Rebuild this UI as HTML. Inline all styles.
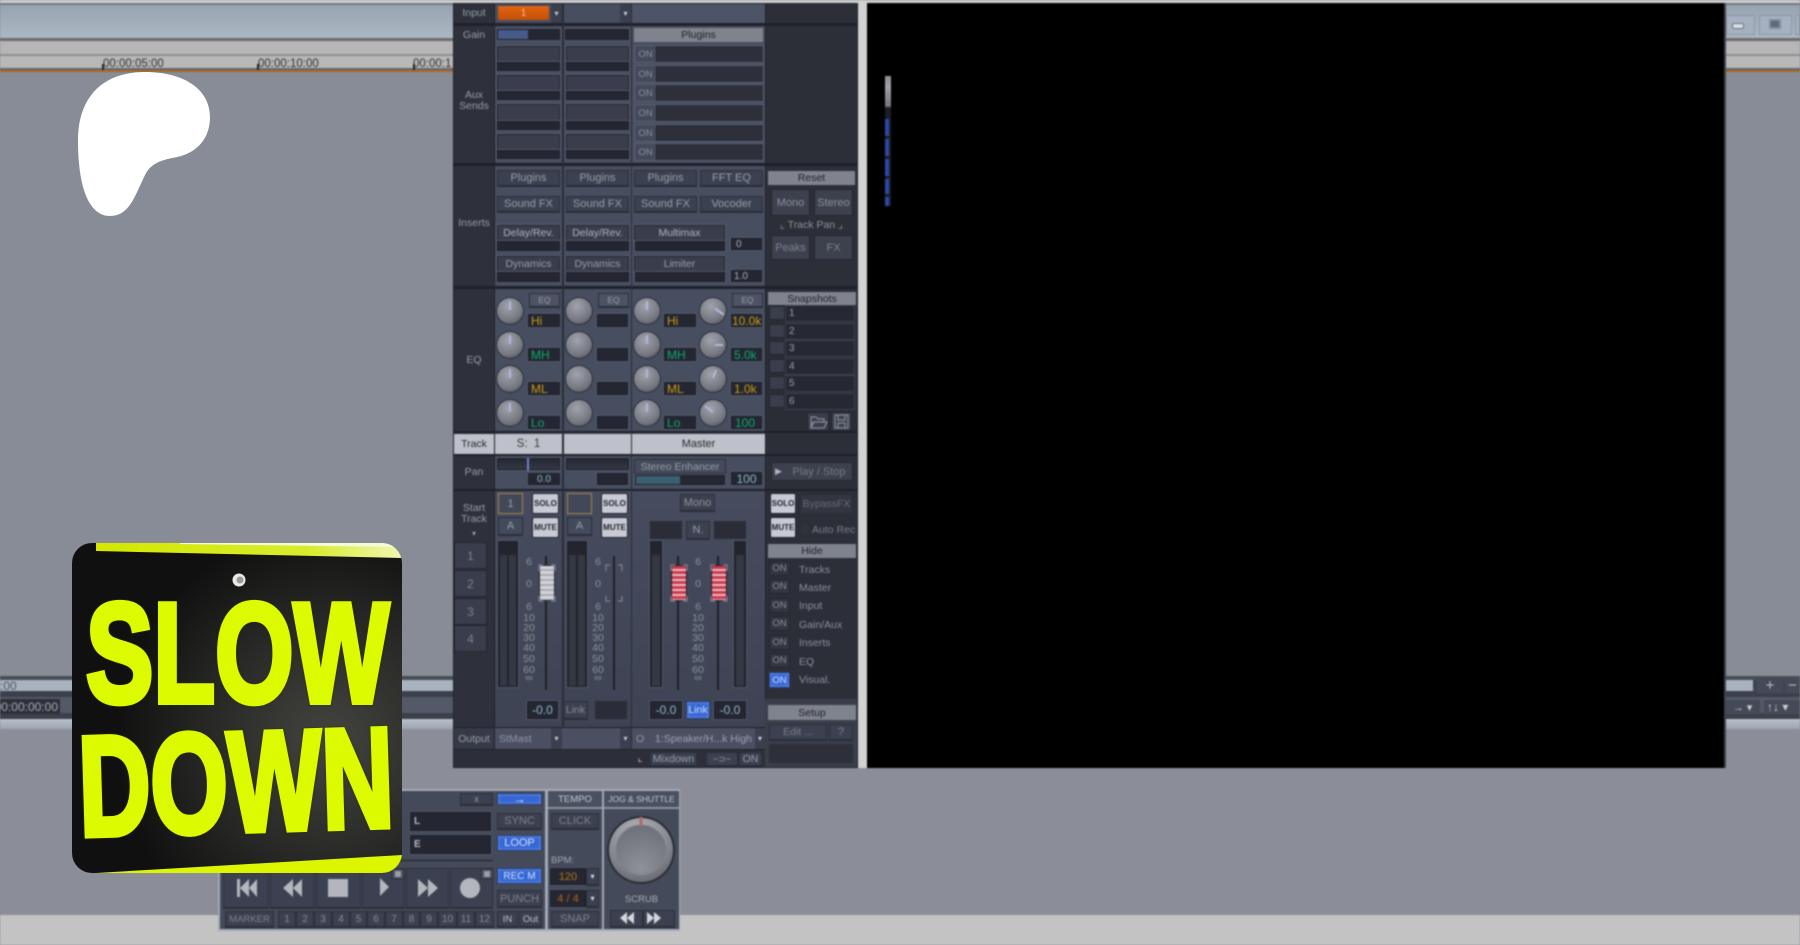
<!DOCTYPE html>
<html><head><meta charset="utf-8"><style>
html,body{margin:0;padding:0;width:1800px;height:945px;overflow:hidden;background:#878c96;font-family:"Liberation Sans",sans-serif}
div,span{position:absolute;box-sizing:border-box}
.c{display:flex;align-items:center;justify-content:center;white-space:nowrap;font-size:11px;color:#989da8}
.u{left:0;top:0;width:1800px;height:945px;filter:blur(.7px)}
.d{background:#242732;box-shadow:inset 0 0 0 1px #1c1e27,0 0 0 1px #51586a}
.b{background:#3b4150;border:1px solid #2c2f3a;box-shadow:0 1px 0 #2a2d37}
.h{background:#7f838d;color:#1f2128}
.l{background:#c8cad5;color:#22242b;border:1px solid #22242b;font-size:8px;font-weight:bold;border-radius:2px}
.n{background:#3667d4;color:#cfe0ff;box-shadow:inset 0 0 3px #7ea0f0;border:1px solid #263a70}
.y{color:#c99a12;font-size:12px;justify-content:flex-start;padding-left:3px}
.g{color:#0ea868;font-size:12px;justify-content:flex-start;padding-left:3px}
.v{color:#8fb6c8;font-size:12px}
.t{text-align:center}
.m{background:#3a3e4c;border:1px solid #23262e}
.a{background:#3a3e4c;border:1px solid #23262e;box-shadow:0 0 0 1px #565d70}
.o{background:#2d303b;box-shadow:0 0 0 1px #585f72}
.p{background:#444a5a;box-shadow:1px 0 0 #23262e;font-size:9.500px;color:#8a8f9b}
.f{background:#262932;box-shadow:0 0 0 1px #3d414d}
text{font-family:"Liberation Sans",sans-serif}
</style></head><body>

<div class="u">
<div style="left:0;top:0;width:1800px;height:3px;background:#cfcfcf"></div>
<div style="left:0;top:3px;width:1800px;height:3px;background:#74787e"></div>
<div style="left:0;top:5px;width:1800px;height:33px;background:linear-gradient(#97a3b1,#abb7c2)"></div>
<div style="left:0;top:38px;width:1800px;height:3px;background:#6c6c6e"></div>
<div style="left:0;top:41px;width:1800px;height:13px;background:#b6b6b6"></div>
<div style="left:0;top:54px;width:1800px;height:2px;background:#8e8e90"></div>
<div style="left:0;top:56px;width:1800px;height:13px;background:#b8b8b8"></div>
<div style="left:0;top:68px;width:1800px;height:2px;background:#66666a"></div>
<div style="left:0;top:70px;width:1800px;height:2px;background:#a8682a"></div>
<div class="c" style="left:103px;top:57px;height:13px;font-size:11.500px;color:#333337">00:00:05:00</div>
<div class="c" style="left:258px;top:57px;height:13px;font-size:11.500px;color:#333337">00:00:10:00</div>
<div class="c" style="left:413px;top:57px;height:13px;font-size:11.500px;color:#333337">00:00:1</div>
<div style="left:102px;top:64px;width:2px;height:6px;background:#222"></div>
<div style="left:257px;top:64px;width:2px;height:6px;background:#222"></div>
<div style="left:413px;top:64px;width:2px;height:6px;background:#222"></div>

<!-- top right buttons -->
<div style="left:1726px;top:15px;width:29px;height:20px;background:#a5b1c0;border:1px solid #8c97a6"></div>
<div style="left:1732px;top:23px;width:12px;height:6px;background:#d9dde2;border:1px solid #6b7280;border-radius:2px"></div>
<div style="left:1759px;top:15px;width:33px;height:20px;background:#a5b1c0;border:1px solid #8c97a6"></div>
<div style="left:1769px;top:19px;width:12px;height:10px;background:#5f6876;border:2px solid #838c9a"></div>
<div style="left:1795px;top:15px;width:5px;height:20px;background:#a5b1c0;border:1px solid #8c97a6"></div>

<!-- middle strip -->
<div style="left:0;top:676px;width:1800px;height:5px;background:#484d59"></div>
<div style="left:0;top:680px;width:1800px;height:11px;background:#a9b3bf"></div>
<div style="left:0;top:691px;width:1800px;height:28px;background:#535967"></div>
<div style="left:0;top:691px;width:1800px;height:6px;background:#3c404b"></div>
<div style="left:0;top:713px;width:1800px;height:6px;background:#3c404b"></div>
<div style="left:0;top:719px;width:1800px;height:10px;background:linear-gradient(#b9c1ca,#9aa4b0)"></div>
<div style="left:0;top:729px;width:1800px;height:186px;background:#8b8e98"></div>
<div style="left:0;top:915px;width:1800px;height:30px;background:#c3c3c3"></div>
<div class="c" style="left:0;top:680px;height:11px;font-size:12px;color:#4c5868">:00</div>
<div class="c" style="left:0;top:699px;width:60px;height:15px;background:#2d303a;font-size:12px;color:#a5a8ad;overflow:hidden;justify-content:flex-end;padding-right:2px">00:00:00:00</div>
<div style="left:1753px;top:680px;width:47px;height:12px;background:#3e434f"></div>
<div class="c" style="left:1757px;top:678px;width:26px;height:15px;font-size:15px;color:#bcc0c8;background:#444a57">+</div>
<div class="c" style="left:1785px;top:678px;width:15px;height:15px;font-size:15px;color:#bcc0c8;background:#444a57">−</div>
<div class="c" style="left:1725px;top:700px;width:35px;height:14px;font-size:11px;color:#c8ccd3;background:#444a57">→ ▾</div>
<div class="c" style="left:1764px;top:700px;width:36px;height:14px;font-size:12px;color:#c8ccd3;background:#444a57;justify-content:flex-start;padding-left:3px">↑↓ ▾</div>

<!-- transport -->
<div style="left:218px;top:789px;width:462px;height:142px;background:#a3a9b5"></div>
<div style="left:220px;top:791px;width:325px;height:138px;background:#444a59"></div>
<div style="left:548px;top:791px;width:54px;height:138px;background:#444a59"></div>
<div style="left:604px;top:791px;width:75px;height:138px;background:#444a59"></div>
<div style="left:548px;top:807px;width:54px;height:2px;background:#8b91a0"></div>
<div style="left:604px;top:807px;width:75px;height:2px;background:#8b91a0"></div>
<div class="c" style="left:548px;top:791px;width:54px;height:16px;font-size:9.500px;color:#c4c8d2;background:#4a5060">TEMPO</div>
<div class="c" style="left:604px;top:791px;width:75px;height:16px;font-size:8.500px;color:#c4c8d2;background:#4a5060">JOG &amp; SHUTTLE</div>
<div class="c b" style="left:460px;top:793px;width:33px;height:12px;font-size:9px">x</div>
<div class="c n" style="left:497px;top:793px;width:45px;height:12px;font-size:12px;color:#e2e8f7">→</div>
<div class="c d" style="left:410px;top:812px;width:81px;height:19px;justify-content:flex-start;padding-left:4px;color:#b9bcc4;font-weight:bold;font-size:10px">L</div>
<div class="c d" style="left:410px;top:835px;width:81px;height:19px;justify-content:flex-start;padding-left:4px;color:#b9bcc4;font-weight:bold;font-size:10px">E</div>
<div style="left:400px;top:860px;width:93px;height:1px;background:#1c1e26"></div>
<div class="c b" style="left:497px;top:813px;width:45px;height:16px;color:#7d828e">SYNC</div>
<div class="c n" style="left:497px;top:835px;width:45px;height:16px">LOOP</div>
<div class="c n" style="left:497px;top:868px;width:45px;height:16px;font-size:10px">REC M</div>
<div class="c b" style="left:497px;top:890px;width:45px;height:17px;color:#7d828e">PUNCH</div>
<div class="c b" style="left:551px;top:813px;width:48px;height:16px;color:#7d828e">CLICK</div>
<div class="c" style="left:551px;top:855px;font-size:9.500px;color:#a2a7b2">BPM:</div>
<div class="c d" style="left:550px;top:868px;width:36px;height:17px;color:#b5730f;font-size:11px">120</div>
<div class="c b" style="left:586px;top:868px;width:13px;height:17px;font-size:8px;color:#dde">▾</div>
<div class="c d" style="left:550px;top:890px;width:36px;height:17px;color:#b5620f;font-size:11px">4 / 4</div>
<div class="c b" style="left:586px;top:890px;width:13px;height:17px;font-size:8px;color:#dde">▾</div>
<div class="c b" style="left:551px;top:911px;width:48px;height:16px;color:#7d828e">SNAP</div>
<div class="c b" style="left:225px;top:911px;width:49px;height:16px;font-size:9.500px;color:#7d828e">MARKER</div>
<div class="c b" style="left:278px;top:911px;width:18px;height:16px;font-size:10px;color:#858a96">1</div>
<div class="c b" style="left:296px;top:911px;width:18px;height:16px;font-size:10px;color:#858a96">2</div>
<div class="c b" style="left:314px;top:911px;width:18px;height:16px;font-size:10px;color:#858a96">3</div>
<div class="c b" style="left:332px;top:911px;width:18px;height:16px;font-size:10px;color:#858a96">4</div>
<div class="c b" style="left:350px;top:911px;width:17px;height:16px;font-size:10px;color:#858a96">5</div>
<div class="c b" style="left:367px;top:911px;width:18px;height:16px;font-size:10px;color:#858a96">6</div>
<div class="c b" style="left:385px;top:911px;width:18px;height:16px;font-size:10px;color:#858a96">7</div>
<div class="c b" style="left:403px;top:911px;width:17px;height:16px;font-size:10px;color:#858a96">8</div>
<div class="c b" style="left:420px;top:911px;width:18px;height:16px;font-size:10px;color:#858a96">9</div>
<div class="c b" style="left:438px;top:911px;width:19px;height:16px;font-size:10px;color:#858a96">10</div>
<div class="c b" style="left:457px;top:911px;width:18px;height:16px;font-size:10px;color:#858a96">11</div>
<div class="c b" style="left:475px;top:911px;width:19px;height:16px;font-size:10px;color:#858a96">12</div>
<div class="c b" style="left:497px;top:911px;width:21px;height:16px;font-size:9.500px;color:#bfc2c9">IN</div>
<div class="c b" style="left:519px;top:911px;width:23px;height:16px;font-size:9.500px;color:#bfc2c9">Out</div>
<div class="b" style="left:223px;top:868px;width:46px;height:40px"></div>
<div class="b" style="left:270px;top:868px;width:45px;height:40px"></div>
<div class="b" style="left:316px;top:868px;width:45px;height:40px"></div>
<div class="b" style="left:362px;top:868px;width:43px;height:40px"></div>
<div class="b" style="left:406px;top:868px;width:43px;height:40px"></div>
<div class="b" style="left:450px;top:868px;width:43px;height:40px"></div>
<div class="b" style="left:610px;top:910px;width:33px;height:17px"></div>
<div class="b" style="left:643px;top:910px;width:32px;height:17px"></div>
<div class="c" style="left:604px;top:894px;width:75px;font-size:9.500px;color:#a8adb8">SCRUB</div>

<svg style="position:absolute;left:0;top:0" width="1800" height="945">
<defs>
<radialGradient id="jog" cx=".45" cy=".25" r=".85"><stop offset="0" stop-color="#b4b6bb"/><stop offset=".6" stop-color="#84878e"/><stop offset="1" stop-color="#5f626a"/></radialGradient>
<radialGradient id="joi" cx=".5" cy=".85" r=".85"><stop offset="0" stop-color="#8e9197"/><stop offset="1" stop-color="#6c7078"/></radialGradient>
</defs>
<g fill="#b3b6bd">
<path d="M237 879h3v18h-3zM240 888l9-9v18zM249 888l8-9v18z"/>
<path d="M283 888l10-9v18zM293 888l9-9v18z"/>
<rect x="328" y="879" width="20" height="18"/>
<path d="M380 878l9 9-9 9z"/>
<path d="M418 879l10 9-10 9zM428 879l10 9-10 9z"/>
<circle cx="470" cy="888" r="10"/>
<path d="M623 918l7-6v12zM630 918l7-6v12zM650 912l7 6-7 6zM657 912l7 6-7 6z" transform="translate(-3 0)" fill="#d4d7de"/>
</g>
<rect x="392" y="869" width="12" height="10" fill="#4a4f5d" stroke="#2c2f3a"/><rect x="395" y="871" width="6" height="6" fill="#9a9da5"/>
<rect x="481" y="869" width="12" height="10" fill="#4a4f5d" stroke="#2c2f3a"/><rect x="484" y="871" width="6" height="6" fill="#9a9da5"/>
<circle cx="641" cy="850" r="34" fill="#2a2d36"/>
<circle cx="641" cy="850" r="32" fill="url(#jog)"/>
<circle cx="641" cy="850" r="25" fill="url(#joi)" stroke="#7f828a"/>
<rect x="639.500" y="817" width="3" height="9" fill="#b06a6e"/>
</svg>

<!-- main panel -->
<div style="left:453px;top:3px;width:405px;height:765px;background:#20222a"></div>
<div style="left:454px;top:4px;width:403px;height:763px;background:#2e313b"></div>
<div style="left:495px;top:4px;width:270px;height:745px;background:#474e60"></div>
<div style="left:632px;top:4px;width:133px;height:19px;background:#4e5467"></div>
<div style="left:495px;top:489px;width:270px;height:240px;background:linear-gradient(#464c5e,#3d4353)"></div>
<div style="left:454px;top:728px;width:310px;height:21px;background:#4a5062"></div>
<div style="left:454px;top:728px;width:41px;height:21px;background:#363a46"></div>
<div style="left:454px;top:750px;width:403px;height:17px;background:#2c2f39"></div>
<div style="left:765px;top:4px;width:92px;height:763px;background:#2c2f38"></div>
<div style="left:765px;top:289px;width:92px;height:144px;background:#2a2d36"></div>
<div style="left:454px;top:23px;width:403px;height:3px;background:#1f2129"></div>
<div style="left:454px;top:163px;width:403px;height:3px;background:#1f2129"></div>
<div style="left:454px;top:286px;width:403px;height:3px;background:#1f2129"></div>
<div style="left:454px;top:431px;width:403px;height:2px;background:#1f2129"></div>
<div style="left:454px;top:454px;width:403px;height:2px;background:#1f2129"></div>
<div style="left:454px;top:489px;width:403px;height:2px;background:#1f2129"></div>
<div style="left:454px;top:727px;width:403px;height:1px;background:#1f2129"></div>
<div style="left:454px;top:749px;width:403px;height:1px;background:#1f2129"></div>
<div style="left:494px;top:4px;width:1px;height:745px;background:#1f2129"></div>
<div style="left:562px;top:4px;width:2px;height:724px;background:#2a2d37"></div>
<div style="left:631px;top:4px;width:1px;height:745px;background:#2a2d37"></div>
<div style="left:765px;top:4px;width:1px;height:763px;background:#1f2129"></div>
<div style="left:858px;top:3px;width:9px;height:765px;background:#d2d2d2"></div>

<!-- row labels -->
<div class="c" style="left:454px;top:5px;width:40px;height:16px;font-size:10.500px">Input</div>
<div class="c" style="left:454px;top:28px;width:40px;height:14px;font-size:10.500px">Gain</div>
<div class="t c" style="left:454px;top:90px;width:40px;height:22px;font-size:10.500px;white-space:normal;line-height:11px">Aux<br>Sends</div>
<div class="c" style="left:454px;top:216px;width:40px;height:14px;font-size:10.500px">Inserts</div>
<div class="c" style="left:454px;top:353px;width:40px;height:14px;font-size:10.500px">EQ</div>
<div class="c" style="left:454px;top:434px;width:40px;height:20px;background:#bec1c9;color:#25272e;font-size:10.500px">Track</div>
<div class="c" style="left:454px;top:465px;width:40px;height:14px;font-size:10.500px">Pan</div>
<div class="t c" style="left:454px;top:503px;width:40px;height:22px;font-size:10.500px;white-space:normal;line-height:11px">Start<br>Track</div>
<div class="c" style="left:454px;top:528px;width:40px;height:10px;font-size:8px">▾</div>
<div class="c m" style="left:454px;top:542px;width:33px;height:27px;font-size:12px;color:#7e828d">1</div>
<div class="c m" style="left:454px;top:570px;width:33px;height:27px;font-size:12px;color:#7e828d">2</div>
<div class="c m" style="left:454px;top:598px;width:33px;height:27px;font-size:12px;color:#7e828d">3</div>
<div class="c m" style="left:454px;top:625px;width:33px;height:27px;font-size:12px;color:#7e828d">4</div>
<div class="c" style="left:454px;top:732px;width:40px;height:14px;font-size:10.500px">Output</div>

<!-- input row -->
<div class="c" style="left:498px;top:6px;width:51px;height:14px;background:linear-gradient(#e2630e,#c24f08);color:#f2c090;font-size:10px">1</div>
<div class="c" style="left:551px;top:4px;width:11px;height:19px;background:#3a3f4e;font-size:8px;color:#ccd">▾</div>
<div class="c" style="left:620px;top:4px;width:11px;height:19px;background:#3a3f4e;font-size:8px;color:#ccd">▾</div>

<!-- gain -->
<div class="d" style="left:497px;top:29px;width:63px;height:11px"></div>
<div style="left:498px;top:30px;width:30px;height:9px;background:#475a8c"></div>
<div class="d" style="left:565px;top:29px;width:64px;height:11px"></div>
<div class="c h" style="left:634px;top:28px;width:129px;height:14px;font-size:10.500px">Plugins</div>

<!-- aux -->
<div class="a" style="left:497px;top:46px;width:63px;height:16px"></div><div class="d" style="left:497px;top:62px;width:63px;height:9px"></div>
<div class="a" style="left:497px;top:75px;width:63px;height:16px"></div><div class="d" style="left:497px;top:91px;width:63px;height:9px"></div>
<div class="a" style="left:497px;top:104px;width:63px;height:17px"></div><div class="d" style="left:497px;top:121px;width:63px;height:9px"></div>
<div class="a" style="left:497px;top:134px;width:63px;height:16px"></div><div class="d" style="left:497px;top:150px;width:63px;height:9px"></div>
<div class="a" style="left:566px;top:46px;width:63px;height:16px"></div><div class="d" style="left:566px;top:62px;width:63px;height:9px"></div>
<div class="a" style="left:566px;top:75px;width:63px;height:16px"></div><div class="d" style="left:566px;top:91px;width:63px;height:9px"></div>
<div class="a" style="left:566px;top:104px;width:63px;height:17px"></div><div class="d" style="left:566px;top:121px;width:63px;height:9px"></div>
<div class="a" style="left:566px;top:134px;width:63px;height:16px"></div><div class="d" style="left:566px;top:150px;width:63px;height:9px"></div>

<!-- ON rows -->
<div class="o" style="left:635px;top:46px;width:128px;height:16px"></div><div class="c p" style="left:635px;top:46px;width:21px;height:16px">ON</div>
<div class="o" style="left:635px;top:66px;width:128px;height:16px"></div><div class="c p" style="left:635px;top:66px;width:21px;height:16px">ON</div>
<div class="o" style="left:635px;top:85px;width:128px;height:16px"></div><div class="c p" style="left:635px;top:85px;width:21px;height:16px">ON</div>
<div class="o" style="left:635px;top:105px;width:128px;height:16px"></div><div class="c p" style="left:635px;top:105px;width:21px;height:16px">ON</div>
<div class="o" style="left:635px;top:125px;width:128px;height:16px"></div><div class="c p" style="left:635px;top:125px;width:21px;height:16px">ON</div>
<div class="o" style="left:635px;top:144px;width:128px;height:16px"></div><div class="c p" style="left:635px;top:144px;width:21px;height:16px">ON</div>

<!-- inserts -->
<div class="c b" style="left:497px;top:170px;width:63px;height:16px">Plugins</div>
<div class="c b" style="left:566px;top:170px;width:63px;height:16px">Plugins</div>
<div class="c b" style="left:634px;top:170px;width:63px;height:16px">Plugins</div>
<div class="c b" style="left:700px;top:170px;width:63px;height:16px">FFT EQ</div>
<div class="c b" style="left:497px;top:196px;width:63px;height:16px">Sound FX</div>
<div class="c b" style="left:566px;top:196px;width:63px;height:16px">Sound FX</div>
<div class="c b" style="left:634px;top:196px;width:63px;height:16px">Sound FX</div>
<div class="c b" style="left:700px;top:196px;width:63px;height:16px">Vocoder</div>
<div class="c a" style="left:497px;top:225px;width:63px;height:16px;font-size:10.500px;color:#b0b4bd">Delay/Rev.</div><div class="d" style="left:497px;top:241px;width:63px;height:10px"></div>
<div class="c a" style="left:566px;top:225px;width:63px;height:16px;font-size:10.500px;color:#b0b4bd">Delay/Rev.</div><div class="d" style="left:566px;top:241px;width:63px;height:10px"></div>
<div class="c a" style="left:634px;top:225px;width:91px;height:16px;font-size:10.500px;color:#b0b4bd">Multimax</div><div class="d" style="left:635px;top:241px;width:90px;height:10px"></div>
<div class="c a" style="left:497px;top:256px;width:63px;height:16px;font-size:10.500px">Dynamics</div><div class="d" style="left:497px;top:272px;width:63px;height:10px"></div>
<div class="c a" style="left:566px;top:256px;width:63px;height:16px;font-size:10.500px">Dynamics</div><div class="d" style="left:566px;top:272px;width:63px;height:10px"></div>
<div class="c a" style="left:634px;top:256px;width:91px;height:16px;font-size:10.500px">Limiter</div><div class="d" style="left:635px;top:272px;width:90px;height:10px"></div>
<div class="c d" style="left:731px;top:238px;width:31px;height:12px;justify-content:flex-start;padding-left:5px;font-size:10px;color:#a9adb6">0</div>
<div class="c d" style="left:731px;top:270px;width:31px;height:12px;justify-content:flex-start;padding-left:3px;font-size:10px;color:#a9adb6">1.0</div>
<div class="c h" style="left:768px;top:171px;width:87px;height:14px;font-size:10.500px">Reset</div>
<div class="c m" style="left:771px;top:189px;width:39px;height:27px;font-size:11px;background:#3d414e;color:#8e929d">Mono</div>
<div class="c m" style="left:814px;top:189px;width:39px;height:27px;font-size:11px;background:#3d414e;color:#8e929d">Stereo</div>
<div class="c" style="left:768px;top:218px;width:87px;height:13px;font-size:10.500px;color:#8e929d">⌞ Track Pan ⌟</div>
<div class="c m" style="left:771px;top:235px;width:39px;height:25px;font-size:11px;background:#3d414e;color:#7e828e">Peaks</div>
<div class="c m" style="left:814px;top:235px;width:39px;height:25px;font-size:11px;background:#3d414e;color:#7e828e">FX</div>

<!-- EQ -->
<div class="c b" style="left:529px;top:293px;width:31px;height:14px;font-size:8.500px;background:#4d5365">EQ</div>
<div class="c b" style="left:598px;top:293px;width:31px;height:14px;font-size:8.500px;background:#4d5365">EQ</div>
<div class="c b" style="left:732px;top:293px;width:31px;height:14px;font-size:8.500px;background:#4d5365">EQ</div>
<div class="c d y" style="left:528px;top:314px;width:32px;height:13px">Hi</div>
<div class="c d g" style="left:528px;top:348px;width:32px;height:13px">MH</div>
<div class="c d y" style="left:528px;top:382px;width:32px;height:13px">ML</div>
<div class="c d g" style="left:528px;top:416px;width:32px;height:13px">Lo</div>
<div class="d" style="left:597px;top:314px;width:31px;height:13px"></div>
<div class="d" style="left:597px;top:348px;width:31px;height:13px"></div>
<div class="d" style="left:597px;top:382px;width:31px;height:13px"></div>
<div class="d" style="left:597px;top:416px;width:31px;height:13px"></div>
<div class="c d y" style="left:664px;top:314px;width:32px;height:13px">Hi</div>
<div class="c d g" style="left:664px;top:348px;width:32px;height:13px">MH</div>
<div class="c d y" style="left:664px;top:382px;width:32px;height:13px">ML</div>
<div class="c d g" style="left:664px;top:416px;width:32px;height:13px">Lo</div>
<div class="c d y" style="left:731px;top:314px;width:31px;height:13px;padding-left:1px">10.0k</div>
<div class="c d g" style="left:731px;top:348px;width:31px;height:13px">5.0k</div>
<div class="c d y" style="left:731px;top:382px;width:31px;height:13px">1.0k</div>
<div class="c d g" style="left:731px;top:416px;width:31px;height:13px;padding-left:4px">100</div>

<!-- snapshots -->
<div class="c h" style="left:768px;top:292px;width:88px;height:13px;font-size:10.500px">Snapshots</div>
<div class="f" style="left:786px;top:306px;width:68px;height:15px"></div><div class="m" style="left:769px;top:306px;width:16px;height:14px"></div><div class="c" style="left:789px;top:306px;height:15px;font-size:10px">1</div>
<div class="f" style="left:786px;top:324px;width:68px;height:15px"></div><div class="m" style="left:769px;top:324px;width:16px;height:14px"></div><div class="c" style="left:789px;top:324px;height:15px;font-size:10px">2</div>
<div class="f" style="left:786px;top:341px;width:68px;height:15px"></div><div class="m" style="left:769px;top:341px;width:16px;height:14px"></div><div class="c" style="left:789px;top:341px;height:15px;font-size:10px">3</div>
<div class="f" style="left:786px;top:359px;width:68px;height:15px"></div><div class="m" style="left:769px;top:359px;width:16px;height:14px"></div><div class="c" style="left:789px;top:359px;height:15px;font-size:10px">4</div>
<div class="f" style="left:786px;top:376px;width:68px;height:15px"></div><div class="m" style="left:769px;top:376px;width:16px;height:14px"></div><div class="c" style="left:789px;top:376px;height:15px;font-size:10px">5</div>
<div class="f" style="left:786px;top:394px;width:68px;height:15px"></div><div class="m" style="left:769px;top:394px;width:16px;height:14px"></div><div class="c" style="left:789px;top:394px;height:15px;font-size:10px">6</div>
<div class="m" style="left:807px;top:412px;width:22px;height:19px"></div>
<div class="m" style="left:831px;top:412px;width:21px;height:19px"></div>

<!-- track names -->
<div class="c" style="left:495px;top:434px;width:67px;height:20px;background:#bec1c9;color:#3a3a3e;font-size:11.500px">S:&nbsp; 1</div>
<div style="left:564px;top:434px;width:67px;height:20px;background:#bec1c9"></div>
<div class="c" style="left:632px;top:434px;width:133px;height:20px;background:#bec1c9;color:#25272e;font-size:11px">Master</div>

<!-- pan -->
<div class="d" style="left:497px;top:458px;width:63px;height:12px;background:linear-gradient(#23262f,#363a47)"></div>
<div style="left:527px;top:458px;width:2px;height:13px;background:#6d82c4"></div>
<div class="c d v" style="left:528px;top:473px;width:32px;height:12px;font-size:10px">0.0</div>
<div class="d" style="left:566px;top:458px;width:63px;height:12px;background:linear-gradient(#23262f,#363a47)"></div>
<div class="d" style="left:597px;top:473px;width:31px;height:12px"></div>
<div class="c b" style="left:634px;top:459px;width:92px;height:15px;font-size:10.500px;background:#464b5b">Stereo Enhancer</div>
<div class="d" style="left:635px;top:475px;width:90px;height:10px"></div>
<div style="left:636px;top:476px;width:44px;height:8px;background:#3b6070"></div>
<div class="c d v" style="left:731px;top:472px;width:31px;height:13px">100</div>
<div class="c m" style="left:771px;top:462px;width:82px;height:19px;background:#3d414e;color:#767a86;padding-left:14px;font-size:11px">Play / Stop</div>
<div class="c" style="left:775px;top:465px;height:13px;font-size:9px;color:#b0b3ba">▶</div>

<!-- strip controls -->
<div class="c" style="left:498px;top:493px;width:25px;height:21px;border:1px solid #a5854a;background:#424858;font-size:11px">1</div>
<div class="c l" style="left:532px;top:493px;width:27px;height:21px">SOLO</div>
<div class="c b" style="left:498px;top:517px;width:25px;height:18px;font-size:11px;background:#434a5c">A</div>
<div class="c l" style="left:532px;top:517px;width:27px;height:21px">MUTE</div>
<div style="left:567px;top:493px;width:25px;height:21px;border:1px solid #a5854a;background:#424858"></div>
<div class="c l" style="left:601px;top:493px;width:27px;height:21px">SOLO</div>
<div class="c b" style="left:567px;top:517px;width:25px;height:18px;font-size:11px;background:#434a5c">A</div>
<div class="c l" style="left:601px;top:517px;width:27px;height:21px">MUTE</div>
<div class="c b" style="left:680px;top:494px;width:35px;height:17px;font-size:11px;color:#8e929d">Mono</div>
<div style="left:650px;top:521px;width:32px;height:18px;background:#2a2d37"></div>
<div class="c b" style="left:686px;top:521px;width:24px;height:18px;font-size:11px">N.</div>
<div style="left:714px;top:521px;width:32px;height:18px;background:#2a2d37"></div>

<!-- meters -->
<div class="d" style="left:498px;top:541px;width:20px;height:146px;background:#22252e"></div>
<div style="left:500px;top:555px;width:7px;height:131px;background:#343843"></div><div style="left:509px;top:555px;width:7px;height:131px;background:#343843"></div>
<div class="d" style="left:567px;top:541px;width:20px;height:146px;background:#22252e"></div>
<div style="left:569px;top:555px;width:7px;height:131px;background:#343843"></div><div style="left:578px;top:555px;width:7px;height:131px;background:#343843"></div>
<div class="d" style="left:650px;top:541px;width:12px;height:146px;background:#22252e"></div>
<div style="left:652px;top:555px;width:8px;height:131px;background:#343843"></div>
<div class="d" style="left:734px;top:541px;width:12px;height:146px;background:#22252e"></div>
<div style="left:736px;top:555px;width:8px;height:131px;background:#343843"></div>
<div style="left:545px;top:556px;width:2px;height:134px;background:#1e2028"></div>
<div style="left:613px;top:556px;width:2px;height:134px;background:#1e2028"></div>
<div style="left:677px;top:556px;width:2px;height:134px;background:#1e2028"></div>
<div style="left:717px;top:556px;width:2px;height:134px;background:#1e2028"></div>
<div style="left:539px;top:565px;width:16px;height:36px;border:1px solid #2a2c34;background:repeating-linear-gradient(#d2d3da 0,#d2d3da 3px,#a9aab2 3px,#a9aab2 5px)"></div>
<div style="left:671px;top:565px;width:16px;height:36px;border:1px solid #2a1c24;background:repeating-linear-gradient(#c93b50 0,#c93b50 3px,#eeb8c0 3px,#eeb8c0 5px)"></div>
<div style="left:711px;top:565px;width:16px;height:36px;border:1px solid #2a1c24;background:repeating-linear-gradient(#c93b50 0,#c93b50 3px,#eeb8c0 3px,#eeb8c0 5px)"></div>

<!-- value boxes -->
<div class="c d v" style="left:527px;top:701px;width:31px;height:18px">-0.0</div>
<div class="c b" style="left:563px;top:701px;width:25px;height:18px;font-size:10.500px;color:#878c98">Link</div>
<div style="left:595px;top:701px;width:32px;height:18px;background:#2a2d37"></div>
<div class="c d v" style="left:650px;top:701px;width:32px;height:18px">-0.0</div>
<div class="c n" style="left:686px;top:701px;width:24px;height:18px;font-size:10.500px">Link</div>
<div class="c d v" style="left:714px;top:701px;width:32px;height:18px">-0.0</div>

<!-- right side -->
<div class="c l" style="left:770px;top:493px;width:26px;height:21px">SOLO</div>
<div class="c m" style="left:800px;top:494px;width:53px;height:20px;font-size:10.500px;background:#33363f;color:#686c77;border-color:#2a2c35">BypassFX</div>
<div class="c l" style="left:770px;top:517px;width:26px;height:21px">MUTE</div>
<div style="left:802px;top:525px;width:7px;height:9px;background:#30333c"></div>
<div class="c" style="left:812px;top:522px;height:15px;font-size:10.500px;color:#7b7f8a">Auto Rec</div>
<div class="c h" style="left:768px;top:544px;width:88px;height:14px;font-size:10.500px">Hide</div>
<div class="c m" style="left:769px;top:561px;width:21px;height:15px;font-size:9.500px;background:#33363f;color:#8a8e99">ON</div><div class="c" style="left:799px;top:562px;height:15px;font-size:10.500px;color:#8d919c">Tracks</div>
<div class="c m" style="left:769px;top:579px;width:21px;height:15px;font-size:9.500px;background:#33363f;color:#8a8e99">ON</div><div class="c" style="left:799px;top:580px;height:15px;font-size:10.500px;color:#8d919c">Master</div>
<div class="c m" style="left:769px;top:598px;width:21px;height:15px;font-size:9.500px;background:#33363f;color:#8a8e99">ON</div><div class="c" style="left:799px;top:598px;height:15px;font-size:10.500px;color:#8d919c">Input</div>
<div class="c m" style="left:769px;top:616px;width:21px;height:15px;font-size:9.500px;background:#33363f;color:#8a8e99">ON</div><div class="c" style="left:799px;top:617px;height:15px;font-size:10.500px;color:#8d919c">Gain/Aux</div>
<div class="c m" style="left:769px;top:635px;width:21px;height:15px;font-size:9.500px;background:#33363f;color:#8a8e99">ON</div><div class="c" style="left:799px;top:635px;height:15px;font-size:10.500px;color:#8d919c">Inserts</div>
<div class="c m" style="left:769px;top:653px;width:21px;height:15px;font-size:9.500px;background:#33363f;color:#8a8e99">ON</div><div class="c" style="left:799px;top:654px;height:15px;font-size:10.500px;color:#8d919c">EQ</div>
<div class="c n" style="left:769px;top:672px;width:21px;height:16px;font-size:9.500px">ON</div><div class="c" style="left:799px;top:672px;height:15px;font-size:10.500px;color:#8d919c">Visual.</div>
<div style="left:765px;top:699px;width:92px;height:68px;background:#3a3e4a"></div>
<div class="c h" style="left:768px;top:705px;width:88px;height:15px;font-size:10.500px">Setup</div>
<div class="c b" style="left:769px;top:724px;width:58px;height:16px;color:#7e828e;font-size:10.500px">Edit ...</div>
<div class="c b" style="left:829px;top:724px;width:24px;height:16px;color:#7e828e">?</div>
<div style="left:769px;top:744px;width:84px;height:19px;background:#2d303a"></div>

<!-- output -->
<div class="c" style="left:499px;top:732px;height:14px;font-size:10.500px;color:#9296a1">StMast</div>
<div class="c" style="left:551px;top:728px;width:11px;height:21px;background:#3a3f4e;font-size:8px;color:#ccd">▾</div>
<div class="c" style="left:620px;top:728px;width:11px;height:21px;background:#3a3f4e;font-size:8px;color:#ccd">▾</div>
<div class="c" style="left:636px;top:732px;height:14px;font-size:10.500px;color:#9296a1">O</div>
<div class="c" style="left:655px;top:732px;height:14px;font-size:10.500px;color:#9ea2ad">1:Speaker/H...k High</div>
<div class="c" style="left:755px;top:728px;width:10px;height:21px;background:#3a3f4e;font-size:8px;color:#ccd">▾</div>
<div class="c" style="left:636px;top:752px;width:8px;height:12px;font-size:10px;color:#c5c8cf">⌞</div>
<div class="c b" style="left:650px;top:752px;width:47px;height:14px;font-size:10.500px">Mixdown</div>
<div class="c b" style="left:706px;top:752px;width:32px;height:14px;font-size:9px">~⊃~</div>
<div class="c b" style="left:739px;top:752px;width:23px;height:14px;font-size:10.500px">ON</div>

<svg style="position:absolute;left:0;top:0" width="1800" height="945">
<defs>
<radialGradient id="kn" cx=".42" cy=".32" r=".8"><stop offset="0" stop-color="#a0a3ac"/><stop offset=".7" stop-color="#74777f"/><stop offset="1" stop-color="#4c4f59"/></radialGradient>
<g id="k"><circle r="14" fill="#2b2e39"/><circle r="13" fill="url(#kn)"/></g>
<g id="sc" font-size="10.500" fill="#8d919c" text-anchor="middle">
<text y="565">6</text><text y="587">0</text><text y="610">6</text><text y="621">10</text><text y="631">20</text><text y="641">30</text><text y="651">40</text><text y="662">50</text><text y="673">60</text><text y="681">∞</text>
</g>
<g id="cr" fill="none" stroke="#7e8392" stroke-width="1.200"><path d="M0 6V0H4M16 6V0H12M0 31V36H4M16 31V36H12"/></g>
</defs>
<use href="#k" x="510" y="311"/><use href="#k" x="510" y="345"/><use href="#k" x="510" y="379"/><use href="#k" x="510" y="413"/>
<use href="#k" x="579" y="311"/><use href="#k" x="579" y="345"/><use href="#k" x="579" y="379"/><use href="#k" x="579" y="413"/>
<use href="#k" x="647" y="311"/><use href="#k" x="647" y="345"/><use href="#k" x="647" y="379"/><use href="#k" x="647" y="413"/>
<use href="#k" x="713" y="311"/><use href="#k" x="713" y="345"/><use href="#k" x="713" y="379"/><use href="#k" x="713" y="413"/>
<g stroke="#b4b8e0" stroke-width="2" fill="none">
<path d="M510 301V310M510 335V344M510 369V378M510 403V412"/>
<path d="M647 301V310M647 335V344M647 369V378M647 403V412"/>
<path d="M715 308.500L723.500 314.500M715 345H723M716 370L713 378M705 406L713 412"/>
</g>
<use href="#sc" x="529"/><use href="#sc" x="598"/><use href="#sc" x="698"/>
<use href="#cr" x="539" y="565"/><use href="#cr" x="606" y="565"/><use href="#cr" x="671" y="565"/><use href="#cr" x="711" y="565"/>
<path d="M811 417h5l2 2h6v3h-11l-2 6zM811 428l3-6h13l-3 6z" fill="none" stroke="#878b96" stroke-width="1.200"/>
<path d="M835 415h13v13h-13z M838 415v5h7v-5 M838 428v-5h7v5" fill="none" stroke="#7d818c" stroke-width="1.400"/>
</svg>

<!-- black window -->
<div style="left:867px;top:3px;width:857px;height:765px;background:#000"></div>
<div style="left:1724px;top:3px;width:2px;height:765px;background:#3e4148"></div>
<div style="left:885px;top:76px;width:6px;height:31px;background:linear-gradient(#8d8e94,#a0a1a6 35%,#737479)"></div>
<div style="left:885px;top:107px;width:6px;height:99px;background:#1b1e28"></div>
<div style="left:885px;top:119px;width:4px;height:17px;background:#2c48a8"></div>
<div style="left:885px;top:139px;width:4px;height:17px;background:#2c48a8"></div>
<div style="left:885px;top:159px;width:4px;height:17px;background:#2c48a8"></div>
<div style="left:885px;top:179px;width:4px;height:15px;background:#2c48a8"></div>
<div style="left:885px;top:197px;width:4px;height:9px;background:#2c48a8"></div>
</div>

<!-- white blob -->
<svg style="position:absolute;left:0;top:0" width="400" height="300">
<path fill="#fff" d="M145 72C185 72 210 90 210 117C210 140 195 155 172 158C158 161 150 165 145 175C135 195 130 216 110 216C90 216 78 190 78 140C78 100 100 72 145 72Z"/>
</svg>

<!-- sign -->
<svg style="position:absolute;left:72px;top:543px;border-radius:20px" width="330" height="330" viewBox="72 543 330 330">
<defs>
<radialGradient id="sg" cx=".78" cy=".6" r=".65"><stop offset="0" stop-color="#44443f"/><stop offset=".6" stop-color="#262624"/><stop offset="1" stop-color="#101010"/></radialGradient>
<linearGradient id="tp" x1="0" y1="0" x2="1" y2="0"><stop offset="0" stop-color="#d4e800"/><stop offset=".7" stop-color="#d8ec30"/><stop offset="1" stop-color="#eff7b0"/></linearGradient>
</defs>
<rect x="72" y="543" width="330" height="330" fill="url(#sg)"/>
<path d="M96 543H402V558L96 551Z" fill="url(#tp)"/>
<path d="M180 543H402V547L180 544Z" fill="#f6f9d8"/>
<path d="M96 873L402 855V873Z" fill="#dcf600"/>
<circle cx="239" cy="580" r="6.500" fill="#e9e9e9"/><circle cx="240" cy="580" r="3.500" fill="#9a9a9a"/>
<g font-family="Liberation Sans" font-weight="bold" fill="#dcfa00" stroke="#dcfa00" stroke-width="6" stroke-linejoin="miter" style="filter:drop-shadow(0 0 1px #2e3000)">
<text x="86" y="702" font-size="142" textLength="303" lengthAdjust="spacingAndGlyphs">SLOW</text>
<text transform="rotate(-1.7 240 831)" x="80" y="831" font-size="142" textLength="315" lengthAdjust="spacingAndGlyphs">DOWN</text>
</g>
</svg>

</body></html>
